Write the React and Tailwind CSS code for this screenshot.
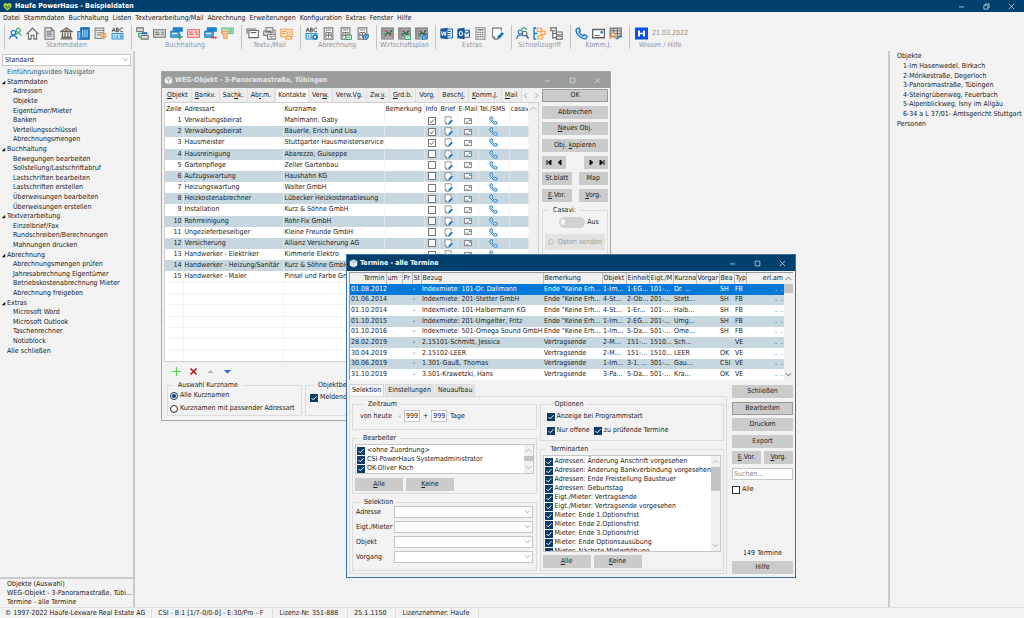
import React from 'react';

const toolbarGroups = [
  { label: 'Stammdaten', icons: ['people', 'house', 'doc', 'bank', 'building', 'listEdit', 'abc'] },
  { label: 'Buchhaltung', icons: ['transfer', 'card', 'stackPlus', 'cardRed', 'stackMinus', 'money'] },
  { label: 'Textv./Mail', icons: ['mail', 'mails', 'mailPerson'] },
  { label: 'Abrechnung', icons: ['abcGear', 'calc', 'calcGreen', 'calcBlue'] },
  { label: 'Wirtschaftsplan', icons: ['chart', 'chartGreen', 'chartBlue'] },
  { label: 'Extras', icons: ['word', 'outlook', 'keypad', 'note'] },
  { label: 'Schnellzugriff', icons: ['peopleSearch', 'folders', 'tree'] },
  { label: 'Komm.J.', icons: ['phone', 'letter', 'calendar'] },
];

const menuItems = ['Datei', 'Stammdaten', 'Buchhaltung', 'Listen', 'Textverarbeitung/Mail', 'Abrechnung', 'Erweiterungen', 'Konfiguration', 'Extras', 'Fenster', 'Hilfe'];

const navigator = [
  { name: 'Stammdaten', items: ['Adressen', 'Objekte', 'Eigentümer/Mieter', 'Banken', 'Verteilungsschlüssel', 'Abrechnungsmengen'] },
  { name: 'Buchhaltung', items: ['Bewegungen bearbeiten', 'Sollstellung/Lastschriftabruf', 'Lastschriften bearbeiten', 'Lastschriften erstellen', 'Überweisungen bearbeiten', 'Überweisungen erstellen'] },
  { name: 'Textverarbeitung', items: ['Einzelbrief/Fax', 'Rundschreiben/Berechnungen', 'Mahnungen drucken'] },
  { name: 'Abrechnung', items: ['Abrechnungsmengen prüfen', 'Jahresabrechnung Eigentümer', 'Betriebskostenabrechnung Mieter', 'Abrechnung freigeben'] },
  { name: 'Extras', items: ['Microsoft Word', 'Microsoft Outlook', 'Taschenrechner', 'Notizblock'] },
];

const objekte = ['1-Im Hasenwedel, Birkach', '2-Mörikestraße, Degerloch', '3-Panoramastraße, Tübingen', '4-Steingrübenweg, Feuerbach', '5-Alpenblickweg, Isny im Allgäu', '6-34 a L 37/01- Amtsgericht Stuttgart'];

const kontakte = [
  ['Verwaltungsbeirat', 'Mahlmann, Gaby', true],
  ['Verwaltungsbeirat', 'Bäuerle, Erich und Lisa', true],
  ['Hausmeister', 'Stuttgarter Hausmeisterservice', true],
  ['Hausreinigung', 'Abarezzo, Guiseppe', false],
  ['Gartenpflege', 'Zeller Gartenbau', false],
  ['Aufzugswartung', 'Haushahn KG', false],
  ['Heizungswartung', 'Walter GmbH', false],
  ['Heizkostenabrechner', 'Lübecker Heizkostenablesung', false],
  ['Installation', 'Kurz & Söhne GmbH', false],
  ['Rohrreinigung', 'Rohr-Fix GmbH', false],
  ['Ungezieferbeseitiger', 'Kleine Freunde GmbH', false],
  ['Versicherung', 'Allianz Versicherung AG', false],
  ['Handwerker - Elektriker', 'Kimmerle Elektro', false],
  ['Handwerker - Heizung/Sanitär', 'Kurz & Söhne GmbH', false],
  ['Handwerker - Maler', 'Pinsel und Farbe GmbH', false],
];

const termine = [
  ['01.08.2012', 'Indexmiete: 101-Dr. Dallmann', 'Ende "Keine Erh...', '1-Im...', '1-EG...', '101-...', 'Dr. ...', 'SH', 'FB'],
  ['01.06.2014', 'Indexmiete: 201-Stetter GmbH', 'Ende "Keine Erh...', '4-St...', '2-Ob...', '201-...', 'Stett...', 'SH', 'FB'],
  ['01.10.2014', 'Indexmiete: 101-Halbermann KG', 'Ende "Keine Erh...', '4-St...', '1-Er...', '101-...', 'Halb...', 'SH', 'FB'],
  ['01.10.2015', 'Indexmiete: 201-Umgelter, Fritz', 'Ende "Keine Erh...', '1-Im...', '2-EG...', '201-...', 'Umg...', 'SH', 'FB'],
  ['01.10.2016', 'Indexmiete: 501-Omega Sound GmbH', 'Ende "Keine Erh...', '1-Im...', '5-Da...', '501-...', 'Ome...', 'SH', 'FB'],
  ['28.02.2019', '2.15101-Schmitt, Jessica', 'Vertragsende', '2-M...', '151-...', '1510...', 'Sch...', '', 'VE'],
  ['30.04.2019', '2.15102-LEER', 'Vertragsende', '2-M...', '151-...', '1510...', 'LEER', 'OK', 'VE'],
  ['30.06.2019', '1.301-Gauß, Thomas', 'Vertragsende', '1-Im...', '3-1. ...', '301-...', 'Gau...', 'CSI', 'VE'],
  ['31.10.2019', '3.501-Krawetzki, Hans', 'Vertragsende', '3-Pa...', '5-Da...', '501-...', 'Kra...', 'OK', 'VE'],
];

const terminarten = ['Adressen: Änderung Anschrift vorgesehen', 'Adressen: Änderung Bankverbindung vorgesehen', 'Adressen: Ende Freistellung Bausteuer', 'Adressen: Geburtstag', 'Eigt./Mieter: Vertragsende', 'Eigt./Mieter: Vertragsende vorgesehen', 'Mieter: Ende 1.Optionsfrist', 'Mieter: Ende 2.Optionsfrist', 'Mieter: Ende 3.Optionsfrist', 'Mieter: Ende Optionsausübung', 'Mieter: Nächste Mieterhöhung'];

const gray = '#777';
const blue = '#1173c0';
const green = '#35a569';
const orange = '#f3a14f';

const phonePath = 'M2.2 1.2 L3.8 .9 L5 3.5 L3.8 4.6 C4.5 6 5.8 7.4 7.4 8.2 L8.5 7 L11.1 8.3 L10.7 10.2 C10 11.6 7.6 11 5.4 9.5 C2.8 7.6 .7 4.7 1 2.6 Z';

const calcShape = (
  <>
    <path d="M2 .8h8v10.4H2z" stroke={gray} fill="#fff" />
    <path d="M3.5 2.8h5M3.5 5v5M6 5v5M8.5 5v5M3.5 5h5M3.5 7.5h5" stroke={gray} />
  </>
);
const chartShape = (
  <>
    <path d="M.7 1h10.6v10H.7z" fill="#b4b4b4" stroke="#777" />
    <path d="M3 1v10M1 3.5h10M1 6h10M1 8.5h10" stroke="#777" strokeWidth=".6" />
    <path d="M4 8l2-3 1.5 1.5L10 3" stroke="#15713b" strokeWidth="1.2" />
    <path d="M4.5 4.5l1.5-1M8 8l1.5-2" stroke="#c33" strokeWidth="1.2" />
  </>
);
const greenBadge = <path d="M6.5 7.5h5v4h-5zM8 9.5h2" fill="#e8f5ec" stroke={green} strokeWidth=".9" />;
const blueBadge = <path d="M7 11.3v-2.5l2-1.8h2.3v2.4l-2 1.7z M8.2 10l2-2" fill="#dcebf8" stroke={blue} />;
const abcShape = (
  <>
    <path d="M1 4.5L2.5 .8 4 4.5M1.5 3.3h2M5 .8v3.7M5 1h1.2c1 0 1 1.6 0 1.6H5h1.4c1.2 0 1.2 1.8 0 1.8H5M11 1.3C9.5 .2 8.2 1.2 8.2 2.6s1.4 2.3 2.8 1.4" stroke="#555" strokeWidth=".9" />
    <path d="M1 6h10v5H1z" fill="#cfe6f7" stroke="#2b93d6" />
    <path d="M3 7.5v2.2M5 7.5h1.3L5 9.7h1.5M8 7.5h1.5v2.2H8M8.5 8.6h1" stroke="#2b93d6" strokeWidth=".8" />
  </>
);

const drawings = {
  people: (
    <>
      <circle cx="8.5" cy="3" r="1.9" stroke={green} />
      <path d="M6.3 7.2c.8-2.1 4.4-2.1 5.2 1" stroke={green} />
      <circle cx="4" cy="5.2" r="2" stroke={blue} />
      <path d="M.6 11.2C.9 6.9 7 6.9 7.4 11.2" stroke={blue} />
    </>
  ),
  house: <path d="M.5 6.5L6 1l5.5 5.5M2.2 5.2v6h2.5V7.6h2.6v3.6h2.5v-6" stroke="#666" strokeWidth="1" />,
  doc: (
    <>
      <path d="M1.8.7h5.7l2.7 2.7v7.9H1.8z" fill="#ddd" stroke={gray} />
      <path d="M3.3 4h5M3.3 5.5h5M3.3 7h5M3.3 8.5h5M7.5.7v2.7h2.7" stroke={gray} strokeWidth=".8" />
    </>
  ),
  bank: (
    <>
      <path d="M.8 4.2L6 .8l5.2 3.4zM.6 11h10.8M1.3 9.6h9.4" fill="#ccc" stroke="#6b6155" strokeWidth="1.1" />
      <path d="M2.3 5v4.2M4.7 5v4.2M7.3 5v4.2M9.7 5v4.2" stroke="#6b6155" strokeWidth="1.2" />
      <circle cx="6" cy="3" r=".9" fill="#6b6155" />
    </>
  ),
  building: (
    <>
      <path d="M3.5.8h7.7v10.4H3.5z" fill="#1f7fcc" stroke="#14609d" />
      <path d="M.8 4.2h2.7v7H.8z" fill="#8ec3ec" stroke="#1f7fcc" />
      <path d="M5.3 2.5v7M7.3 2.5v7M9.3 2.5v7" stroke="#bfe0fa" strokeWidth=".9" />
    </>
  ),
  listEdit: (
    <>
      <path d="M1 1h8v9.5H1zM1 3.3h8" fill="#eee" stroke="#888" />
      <path d="M2.5 5.3h6M2.5 7.3h4" stroke="#888" />
      <path d="M6 6.2h5.5M6 8.5h5.5M8 11l3.5-2.5" stroke={orange} strokeWidth="1.3" />
    </>
  ),
  abc: abcShape,
  transfer: (
    <>
      <path d="M.7.8h6v3.4h-6z" fill="#ddd" stroke={gray} />
      <path d="M4.8 7.8h6.5v3.4H4.8z" fill="#ddd" stroke={gray} />
      <path d="M2 5.8h6M2.5 5.5v3.7h2" stroke={green} strokeWidth="1.2" />
      <path d="M5.5 4.8h5v2h-5z" fill="#2c6fb0" />
    </>
  ),
  card: (
    <>
      <path d="M.6 2.6h10.8v6.8H.6z" fill="#ddd" stroke={gray} />
      <path d="M2 4.8h3.5M2 6.8h4M7.5 4.8h2.5M7.5 6.8h2.5" stroke={gray} />
    </>
  ),
  stackPlus: (
    <>
      <path d="M3 .8h8.3v3H3z" fill="#1f86d0" stroke="#1f7fcc" />
      <path d="M.7 4h7.8v5.5H.7z" fill="#55a7e2" stroke="#1f7fcc" />
      <path d="M2 6h4.5" stroke="#fff" />
      <path d="M9 6.3v5.2M6.4 9h5.2" stroke={green} strokeWidth="1.5" />
    </>
  ),
  cardRed: (
    <>
      <path d="M.6 2.6h10.8v6.8H.6z" fill="#fadcdc" stroke="#ee5c64" />
      <path d="M2 4.8h3M2 6.8h4M7 4.8h3M8 6.8h2" stroke="#ee5c64" strokeWidth="1.2" />
    </>
  ),
  stackMinus: (
    <>
      <path d="M3 .8h8.3v3H3z" fill="#1f86d0" stroke="#1f7fcc" />
      <path d="M.7 4h7.8v5.5H.7z" fill="#55a7e2" stroke="#1f7fcc" />
      <path d="M2 6h4.5" stroke="#fff" />
      <path d="M6.3 9.7h5.3" stroke="#e0343e" strokeWidth="1.5" />
    </>
  ),
  money: (
    <>
      <path d="M.7 1h10.6v5H.7z" fill="#bfe3cd" stroke="#6cbd8a" />
      <circle cx="8.5" cy="3.4" r="1.3" stroke="#6cbd8a" />
      <path d="M1.5 4h4.6v2.4H1.5zM2.5 6.5h3v4h-3z" fill="#fbd9b0" stroke={orange} />
    </>
  ),
  mail: (
    <>
      <path d="M2.7 3.2h8.7v6.6H2.7z" fill="#fff" stroke="#666" />
      <path d="M.6 1.8h9M.9 1.5v4.7M4.5 5.2h5" stroke="#666" />
    </>
  ),
  mails: (
    <>
      <path d="M2.7.7h6.5v4H2.7zM.7 3.7h6.5v4H.7z" fill="#eee" stroke={gray} />
      <path d="M4.2 6.7h7v4.5h-7zM5.5 8.2l2.2 1.4 2.2-1.4M9.2 3h2v3.5" fill="#fff" stroke={gray} />
    </>
  ),
  mailPerson: (
    <>
      <path d="M.7 2h10.6v7H.7z" fill="#fce4c8" stroke={orange} />
      <path d="M2 4.2h4M2 6h3" stroke={orange} />
      <circle cx="8" cy="6" r="1.4" fill="#fff" stroke={orange} />
      <path d="M5.5 11.2c.3-3.6 4.7-3.6 5 0z" fill="#fff" stroke={orange} />
    </>
  ),
  abcGear: (
    <>
      {abcShape}
      <circle cx="9.3" cy="9.3" r="1.8" fill="#fff" stroke="#1569b0" strokeWidth="1.3" />
    </>
  ),
  calc: calcShape,
  calcGreen: <>{calcShape}{greenBadge}</>,
  calcBlue: <>{calcShape}{blueBadge}</>,
  chart: chartShape,
  chartGreen: <>{chartShape}{greenBadge}</>,
  chartBlue: <>{chartShape}{blueBadge}</>,
  word: (
    <>
      <path d="M5.5 1.8h6v8.4h-6z" fill="#fff" stroke="#2467a8" />
      <path d="M7 4h3M7 6h3M7 8h3" stroke="#2467a8" />
      <path d="M.3 1.6L7 .6v10.8L.3 10.4z" fill="#17599c" />
      <path d="M1.4 4l.9 4 1.2-3.6L4.7 8l.9-4" stroke="#fff" strokeWidth=".9" />
    </>
  ),
  outlook: (
    <>
      <path d="M5.5 3h6v6.5h-6zM6 3.5l3 2.7 2.5-2.4" fill="#fff" stroke="#2467a8" />
      <path d="M.3 1.6L7 .6v10.8L.3 10.4z" fill="#17599c" />
      <ellipse cx="3.6" cy="6" rx="1.5" ry="1.9" stroke="#fff" strokeWidth="1" />
    </>
  ),
  keypad: (
    <>
      <path d="M1.8.7h8.4v10.6H1.8z" fill="#f0f0f0" stroke="#888" />
      <path d="M3.3 2.6h5.4" stroke="#777" strokeWidth="1.3" />
      <path d="M3 5h6M3 7h6M3 9h6" stroke="#777" strokeDasharray="1.3 .9" strokeWidth="1.2" />
    </>
  ),
  note: (
    <>
      <path d="M9.5 4V1h-8v8.5l1.8 1.7h3" fill="#fff" stroke="#777" />
      <path d="M1.5 9.2h1.9v2" stroke="#777" />
      <path d="M5.6 11.6l.7-3 3.9-4 1.7 1.7-4 4.3z" fill={blue} />
    </>
  ),
  peopleSearch: (
    <>
      <circle cx="4" cy="4.6" r="1.9" stroke={blue} />
      <path d="M.6 11C.9 6.9 5 6.6 6.2 8.6" stroke={blue} />
      <path d="M4.8 2.2C6 .2 9.6.4 10 2.7" stroke={green} />
      <circle cx="8" cy="6" r="2.1" fill="#fff" stroke="#666" />
      <path d="M9.4 7.6l2.2 3" stroke="#555" strokeWidth="1.4" />
    </>
  ),
  folders: (
    <>
      <path d="M3 .9H1v10.2h2M1 6h3" stroke={blue} strokeWidth="1.2" />
      <path d="M4 1.2h4v3H4zM7.2 3.8h4v3h-4zM4.5 8h4.5v3H4.5z" fill="#fdeede" stroke={orange} />
    </>
  ),
  tree: (
    <>
      <path d="M.8.8h5v2.6h-5zM6 4.6h5.2v2.6H6zM6 8.6h5.2v2.6H6z" fill="#fff" stroke="#666" />
      <path d="M2.5 3.4V10H6M2.5 6H6" stroke="#666" />
    </>
  ),
  phone: <path d={phonePath} fill="#d6e8f7" stroke={blue} strokeWidth="1.2" />,
  letter: (
    <>
      <path d="M.6 2.3h10.8v7.6H.6z" fill="#fff" stroke="#666" strokeWidth="1.2" />
      <path d="M2.3 7.8h5" stroke={gray} />
      <path d="M7.8 3.8h2.2v2.2H7.8z" fill={blue} />
    </>
  ),
  calendar: (
    <>
      <path d="M1 1h10.4v8.3H1z" fill="#ccc" stroke={gray} />
      <path d="M1 3.4h10.4M4.3 1v8M7.8 1v8M1 6h10.4" stroke={gray} />
      <circle cx="3.8" cy="7" r="1.4" fill="#fff" stroke={orange} />
      <path d="M1 11.4c.3-3.2 5.2-3.2 5.5 0" stroke={orange} />
      <path d="M7 11.3l4-3.6" stroke={blue} strokeWidth="1.3" />
    </>
  ),
  cube: (
    <>
      <path d="M6 .6l5 2.2v6L6 11.4l-5-2.6v-6z" fill="#e9eef2" />
      <path d="M1 2.8l5 2.4 5-2.4M6 5.2v6.2M3.5 1.7l5 2.4" stroke="#8fa0ac" strokeWidth=".8" />
    </>
  ),
  heart: (
    <>
      <path d="M6 11.5C2.5 9 .5 6.8.5 4.2.5 1.2 4.2.1 6 2.8 7.8.1 11.5 1.2 11.5 4.2c0 2.6-2 4.8-5.5 7.3z" fill="#a9c93b" />
      <path d="M3.3 3.8l2.7 2 2.7-2v3.4L6 9.4 3.3 7.2z" fill="#4f9a3c" />
      <path d="M4.3 3.3l1.7 1.2 1.7-1.2" stroke="#f2f6c8" />
    </>
  ),
};

function Icon({ name, className = 'size-[13px]' }) {
  return (
    <svg viewBox="0 0 12 12" fill="none" className={`${className} shrink-0`} aria-hidden="true">
      {drawings[name]}
    </svg>
  );
}

// "&" marks the underlined shortcut letter
function Hotkey({ text }) {
  const at = text.indexOf('&');
  if (at < 0) return text;
  return (
    <span>
      {text.slice(0, at)}
      <u>{text[at + 1]}</u>
      {text.slice(at + 2)}
    </span>
  );
}

function Button({ text, className = '' }) {
  return (
    <button className={`flex h-[13px] items-center justify-center bg-[#cbcbcb] ${className}`}>
      <Hotkey text={text} />
    </button>
  );
}

function Chevron({ className = '', up = false }) {
  return (
    <svg viewBox="0 0 8 8" fill="none" className={`size-[7px] ${className}`} aria-hidden="true">
      <path d={up ? 'M1 5.5L4 2.5l3 3' : 'M1 2.5l3 3 3-3'} stroke="currentColor" />
    </svg>
  );
}

function Select({ label, options = [''], className = '' }) {
  return (
    <div className={`relative flex ${className}`}>
      <select aria-label={label} id={label} className="h-3 w-full appearance-none border border-[#c6c6c6] bg-white px-0.5 leading-none">
        {options.map((o) => (
          <option key={o}>{o}</option>
        ))}
      </select>
      <Chevron className="pointer-events-none absolute right-0.5 top-0.5 text-[#999]" />
    </div>
  );
}

function Check({ label, checked = true }) {
  return (
    <label className="flex items-center gap-0.5 whitespace-nowrap">
      <span className="relative flex size-2 shrink-0">
        <input type="checkbox" defaultChecked={checked} className="peer size-2 appearance-none border border-[#333] bg-white checked:border-[#0d3d66] checked:bg-[#0d3d66]" />
        <svg viewBox="0 0 8 8" fill="none" className="pointer-events-none absolute inset-0 hidden size-2 peer-checked:block" aria-hidden="true">
          <path d="M1.5 4l1.8 1.8 3.2-3.6" stroke="#fff" strokeWidth=".9" />
        </svg>
      </span>
      {label}
    </label>
  );
}

function Group({ title, className = '', children }) {
  return (
    <fieldset className={`min-w-0 border border-[#dcdcdc] ${className}`}>
      <legend className="ml-1 px-1 leading-[8px]">{title}</legend>
      {children}
    </fieldset>
  );
}

function Scrollbar({ thumb, color = 'text-[#aaa]' }) {
  return (
    <div className={`flex w-[9px] shrink-0 flex-col items-center justify-between bg-[#f0f0f0] py-0.5 ${color}`}>
      <div className="flex w-full flex-col items-center gap-0.5">
        <Chevron up />
        {thumb && <div className={`w-full bg-[#c4c4c4] ${thumb}`} />}
      </div>
      <Chevron />
    </div>
  );
}

function TitleBar({ title, color }) {
  return (
    <div className={`flex h-4 items-center ${color}`}>
      <Icon name="cube" className="ml-0.5 size-[9px]" />
      <span className="ml-0.5 flex-1 font-bold">{title}</span>
      <WindowButtons />
    </div>
  );
}

function WindowButtons({ restore = false }) {
  return (
    <div className="flex">
      {['Minimieren', 'Maximieren', 'Schließen'].map((name, i) => (
        <button key={name} aria-label={name} className="flex w-[25px] justify-center">
          <svg viewBox="0 0 8 8" fill="none" stroke="#dfe6ec" strokeWidth=".8" className="size-[7px]" aria-hidden="true">
            {i === 0 && <path d="M1 4.5h6" />}
            {i === 1 && !restore && <path d="M1.3 1.3h5.4v5.4H1.3z" />}
            {i === 1 && restore && <path d="M1 2.5h4.5V7H1zM2.5 2.5V1H7v4.5H5.5" />}
            {i === 2 && <path d="M1 1l6 6M7 1L1 7" />}
          </svg>
        </button>
      ))}
    </div>
  );
}

function Toolbar() {
  return (
    <div className="flex h-[27px] items-start pl-1 pt-px">
      {toolbarGroups.map((group) => (
        <div key={group.label} className="flex h-6 flex-col border-l border-[#c4c4c4] pl-0.5 pr-[5px]">
          <div className="flex pt-0.5">
            {group.icons.map((icon) => (
              <button key={icon} aria-label={icon} className="flex w-[17px] justify-center">
                <Icon name={icon} />
              </button>
            ))}
          </div>
          <span className="text-center leading-[10px] text-[#8a95a8]">{group.label}</span>
        </div>
      ))}
      <div className="flex h-6 flex-col border-l border-[#c4c4c4] pl-[5px]">
        <div className="flex items-center gap-1 pt-0.5">
          <button aria-label="Haufe">
            <svg viewBox="0 0 13 12" className="h-[13px] w-[13px]" aria-hidden="true">
              <path d="M0 0h13v12H0z" fill="#0b50f0" />
              <path d="M3 3h2v2.2h3V3h2v6H8V6.8H5V9H3z" fill="#fff" />
            </svg>
          </button>
          <span className="text-[#8f8f8f]">21.03.2022</span>
        </div>
        <span className="pl-1 leading-[10px] text-[#8a95a8]">Wissen / Hilfe</span>
      </div>
    </div>
  );
}

function Sidebar() {
  return (
    <aside className="flex w-[135px] shrink-0 flex-col border-r-2 border-[#cacaca]">
      <Select label="Ansicht" options={['Standard']} className="mx-0.5 mt-[3px]" />
      <nav className="mt-0.5 grid h-[288px] auto-rows-fr items-center">
        <a href="#video" className="pl-[7px] text-[#1d5a80]">Einführungsvideo Navigator</a>
        {navigator.map((section) => (
          <React.Fragment key={section.name}>
            <a href="#sektion" className="flex items-center">
              <svg viewBox="0 0 6 6" className="ml-px mr-px size-[5px]" aria-hidden="true">
                <path d="M5 1v4H1z" fill="#111" />
              </svg>
              {section.name}
            </a>
            {section.items.map((item) => (
              <a key={item} href="#eintrag" className="whitespace-nowrap pl-[13px]">{item}</a>
            ))}
          </React.Fragment>
        ))}
        <a href="#alle" className="pl-[7px]">Alle schließen</a>
      </nav>
      <div className="mt-auto grid auto-rows-fr items-center border-t-2 border-[#cacaca] pl-[7px] pt-px leading-[9px]">
        <a href="#objekte">Objekte (Auswahl)</a>
        <a href="#weg" className="truncate">WEG-Objekt - 3-Panoramastraße, Tübi...</a>
        <a href="#termine">Termine - alle Termine</a>
      </div>
    </aside>
  );
}

const wegTabs = ['&Objekt', '&Bankv.', 'Sac&hk.', 'Ab&r.m.', 'Kontakte', 'Ver&w.', 'Verw.V&g.', 'Zw.&v.', '&Grd.b.', 'Vor&g.', 'Besch&l.', '&Komm.J.', '&Mail'];
const wegCols = ['w-[18px]', 'w-[100px]', 'w-[101px]', 'w-[40px]', 'w-[15px]', 'w-[18px]', 'w-[21px]', 'w-[31px]', ''];
const wegHeads = ['Zeile', 'Adressart', 'Kurzname', 'Bemerkung', 'Info', 'Brief', 'E-Mail', 'Tel./SMS', 'casavi'];

function WegWindow() {
  return (
    <section className="absolute left-[26px] top-5 w-[450px] border border-[#a6a6a6] bg-[#f2f2f2]">
      <TitleBar title="WEG-Objekt - 3-Panoramastraße, Tübingen" color="bg-[#9b9d9c] text-[#e6e6e6]" />
      <div className="flex gap-[3px] pb-1 pl-0.5 pr-0.5">
        <div className="min-w-0 flex-1">
          <div className="flex h-[14px] items-stretch">
            {wegTabs.map((tab) => (
              <button key={tab} className={tab === 'Kontakte' ? 'border border-b-0 border-[#dedede] bg-[#fafafa] px-0.5' : 'border-r border-[#dedede] bg-[#ececec] px-[3px]'}>
                <Hotkey text={tab} />
              </button>
            ))}
            <span className="ml-auto flex items-center gap-1 text-[#999]">
              <Chevron className="rotate-90" />
              <Chevron className="-rotate-90" />
            </span>
          </div>
          <div className="flex border border-[#cfcfcf] bg-white">
            <div className="min-w-0 flex-1">
              <table className="h-[258px] w-full table-fixed border-collapse">
                <colgroup>
                  {wegCols.map((c, i) => (
                    <col key={i} className={c} />
                  ))}
                </colgroup>
                <thead>
                  <tr className="h-3">
                    {wegHeads.map((h) => (
                      <th key={h} className="overflow-hidden whitespace-nowrap border-r border-[#ededed] px-px py-0 text-left font-normal">{h}</th>
                    ))}
                  </tr>
                </thead>
                <tbody>
                  {kontakte.map(([art, name, info], i) => (
                    <tr key={i} className="h-[11px] even:bg-[#c7d7e0] [&>td]:border-r [&>td]:border-[#ededed]/60 [&>td]:py-0">
                      <td className="pr-px text-right">{i + 1}</td>
                      <td className="whitespace-nowrap pl-px">{art}</td>
                      <td className="whitespace-nowrap pl-px">{name}</td>
                      <td />
                      <td className="px-0">
                        <span className="relative mx-auto flex size-2">
                          <input type="checkbox" aria-label={`Info ${i + 1}`} defaultChecked={info} className="peer size-2 appearance-none border border-[#777] bg-white" />
                          <svg viewBox="0 0 8 8" fill="none" className="pointer-events-none absolute inset-0 hidden peer-checked:block" aria-hidden="true">
                            <path d="M1.8 4l1.5 1.7 3-3.4" stroke="#444" strokeWidth=".8" />
                          </svg>
                        </span>
                      </td>
                      <td className="px-0"><Icon name="note" className="mx-auto size-[9px]" /></td>
                      <td className="px-0"><Icon name="letter" className="mx-auto size-2" /></td>
                      <td className="px-0"><Icon name="phone" className="mx-auto size-[9px]" /></td>
                      <td />
                    </tr>
                  ))}
                  {[1, 2, 3, 4, 5, 6, 7].map((n) => (
                    <tr key={n} className="h-[11px] border-t border-[#f3f3f3]">
                      {wegHeads.map((h) => (
                        <td key={h} className="border-r border-[#f3f3f3] p-0" />
                      ))}
                    </tr>
                  ))}
                </tbody>
              </table>
            </div>
            <Scrollbar />
          </div>
          <div className="flex h-[19px] items-center gap-2 pl-2">
            <button aria-label="Neu">
              <svg viewBox="0 0 9 9" className="size-[9px]"><path d="M4.5 0v9M0 4.5h9" stroke="#55d055" strokeWidth="1.2" /></svg>
            </button>
            <button aria-label="Löschen">
              <svg viewBox="0 0 9 9" className="size-[9px]"><path d="M1.5 1.5l6 6M7.5 1.5l-6 6" stroke="#b01818" strokeWidth="1.6" /></svg>
            </button>
            <button aria-label="Nach oben">
              <svg viewBox="0 0 9 9" className="size-[9px]"><path d="M1.5 6l3-3 3 3z" fill="#b0b0b0" /></svg>
            </button>
            <button aria-label="Nach unten">
              <svg viewBox="0 0 9 9" className="size-[9px]"><path d="M1 3h7L4.5 6.5z" fill="#2765e6" /></svg>
            </button>
          </div>
          <div className="flex gap-[3px] pl-[3px]">
            <Group title="Auswahl Kurzname" className="w-[135px] pl-0.5">
              {['Alle Kurznamen', 'Kurznamen mit passender Adressart'].map((text, i) => (
                <label key={text} className="flex h-[13px] items-center gap-0.5 whitespace-nowrap">
                  <input type="radio" name="kurzname" defaultChecked={i === 0} className="size-2 shrink-0 appearance-none rounded-full border border-[#333] bg-white bg-clip-content p-px checked:border-[#0d3d66] checked:bg-[#0d3d66]" />
                  {text}
                </label>
              ))}
            </Group>
            <Group title="Objektbetreuer" className="flex-1 pl-1 pt-1">
              <Check label="Meldender" />
            </Group>
          </div>
        </div>
        <div className="w-[66px] shrink-0 pt-px">
          <div className="flex h-[113px] flex-col justify-between">
            <Button text="OK" className="border border-[#999]" />
            <Button text="Abbrechen" />
            <Button text="&Neues Obj." />
            <Button text="Obj. &kopieren" />
            <div className="flex justify-between">
              {['M4 4v5M8 4L5 6.5 8 9zM18 4l-3 2.5L18 9z', 'M5 4l3 2.5L5 9zM15 4l3 2.5L15 9zM19 4v5'].map((d) => (
                <button key={d} aria-label="Blättern" className="flex h-[13px] w-6 items-center justify-center bg-[#cbcbcb]">
                  <svg viewBox="0 0 22 13" className="h-[13px] w-[22px]"><path d={d} fill="#111" stroke="#111" strokeWidth="1" /></svg>
                </button>
              ))}
            </div>
            <div className="grid grid-cols-2 gap-[7px]"><Button text="St.blatt" /><Button text="Map" /></div>
            <div className="grid grid-cols-2 gap-[7px]"><Button text="&E.Vor." /><Button text="&Vorg." /></div>
          </div>
          <Group title="Casavi:" className="mt-1 px-0.5 pb-1">
            <div className="flex h-4 items-center justify-center gap-0.5 pl-2">
              <button role="switch" aria-checked="false" aria-label="Casavi" className="flex h-[11px] w-[26px] items-center rounded-full bg-[#d2d2d2] pl-0.5">
                <span className="h-1.5 w-1 rounded-sm bg-[#f5f5f5]" />
              </button>
              Aus
            </div>
            <button disabled className="mt-1 flex h-4 w-full items-center justify-center gap-1 whitespace-nowrap bg-[#e2e2e2] text-[#9b9b9b]">
              <span className="size-1.5 rounded-full border border-[#b5c9b5]" />
              Daten senden
            </button>
          </Group>
        </div>
      </div>
    </section>
  );
}

const terminCols = ['w-[36px]', 'w-[16px]', 'w-[10px]', 'w-[9px]', 'w-[122px]', 'w-[59px]', 'w-[24px]', 'w-[23px]', 'w-[24px]', 'w-[23px]', 'w-[23px]', 'w-[15px]', 'w-[12px]', ''];
const terminHeads = ['Termin', 'um', 'Pr', 'St', 'Bezug', 'Bemerkung', 'Objekt', 'Einheit', 'Eigt./M', 'Kurzna', 'Vorgar', 'Bea', 'Typ', 'erl.am'];

function TermineWindow() {
  return (
    <section className="absolute left-[211px] top-[203px] w-[450px] border border-[#3d729f] bg-[#f2f2f2]">
      <TitleBar title="Termine - alle Termine" color="bg-[#00406f] text-white" />
      <div className="mx-0.5 mt-px flex border-l border-t border-[#999] bg-white">
        <div className="min-w-0 flex-1">
          <table className="h-[107px] w-full table-fixed border-collapse">
            <colgroup>
              {terminCols.map((c, i) => (
                <col key={i} className={c} />
              ))}
            </colgroup>
            <thead>
              <tr className="h-[11px] bg-[#f0f0f0]">
                {terminHeads.map((h) => (
                  <th key={h} className="overflow-hidden whitespace-nowrap border-r border-[#bbb] px-px py-0 text-left font-normal first:text-right last:border-r-0 last:text-right">{h}</th>
                ))}
              </tr>
            </thead>
            <tbody>
              {termine.map(([datum, bezug, bemerkung, ...rest], i) => (
                <tr key={i} className={`[&>td]:whitespace-nowrap [&>td]:px-px [&>td]:py-0 ${i === 0 ? 'bg-[#0078d7] text-white' : 'even:bg-[#c7d7e0]'}`}>
                  <td>{datum}</td>
                  <td />
                  <td />
                  <td>-</td>
                  <td>{bezug}</td>
                  <td>{bemerkung}</td>
                  {rest.slice(0, 4).map((cell, n) => (
                    <td key={n}>{cell}</td>
                  ))}
                  <td />
                  <td>{rest[4]}</td>
                  <td>{rest[5]}</td>
                  <td className="text-right">.&nbsp; .</td>
                </tr>
              ))}
            </tbody>
          </table>
        </div>
        <Scrollbar thumb="h-[9px]" color="text-[#555]" />
      </div>
      <div className="mt-1 flex gap-[5px] px-0.5 pb-[3px]">
        <div className="flex min-w-0 flex-1 flex-col">
          <div className="flex h-3 items-stretch gap-px">
            {['Selektion', 'Einstellungen', 'Neuaufbau'].map((tab, i) => (
              <button key={tab} className={i === 0 ? 'border border-b-0 border-[#d5d5d5] bg-[#f7f7f7] px-0.5' : 'border border-b-0 border-[#dcdcdc] bg-[#e4e4e4] px-0.5'}>
                {tab}
              </button>
            ))}
          </div>
          <div className="grid flex-1 grid-cols-2 gap-[3px] border border-[#dcdcdc] px-0.5 pb-0.5 pt-[3px]">
            <div className="flex flex-col gap-1">
              <Group title="Zeitraum" className="h-[30px] pl-[7px]">
                <div className="flex items-center gap-[3px] pt-0.5">
                  <label htmlFor="tage-vor" className="pr-1">von heute</label>-
                  <input id="tage-vor" defaultValue="999" className="h-3 w-4 border border-[#c6c6c6] bg-white text-center" />+
                  <input id="tage-nach" aria-label="Tage nach heute" defaultValue="999" className="h-3 w-4 border border-[#c6c6c6] bg-white text-center" />
                  Tage
                </div>
              </Group>
              <Group title="Bearbeiter" className="px-0.5 pb-0.5">
                <div className="mt-0.5 flex h-[30px] border border-[#c6c6c6] bg-white">
                  <div className="flex-1 overflow-hidden pl-px pt-px">
                    {['<ohne Zuordnung>', 'CSI-PowerHaus Systemadministrator', 'OK-Oliver Koch'].map((t) => (
                      <div key={t} className="flex h-[9px] items-center"><Check label={t} /></div>
                    ))}
                  </div>
                  <Scrollbar thumb="h-[5px]" />
                </div>
                <div className="mt-1 flex gap-[3px]"><Button text="&Alle" className="w-12" /><Button text="&Keine" className="w-12" /></div>
              </Group>
              <Group title="Selektion" className="flex-1 pl-[3px] pr-[3px]">
                <div className="flex flex-col gap-[3px]">
                  {['Adresse', 'Eigt./Mieter', 'Objekt', 'Vorgang'].map((name) => (
                    <div key={name} className="flex items-center">
                      <label htmlFor={name} className="w-[38px] whitespace-nowrap">{name}</label>
                      <Select label={name} className="flex-1" />
                    </div>
                  ))}
                </div>
              </Group>
            </div>
            <div className="flex flex-col gap-1">
              <Group title="Optionen" className="h-[41px] pl-1.5">
                <div className="flex flex-col gap-[5px] pt-1">
                  <Check label="Anzeige bei Programmstart" />
                  <div className="flex gap-1"><Check label="Nur offene" /><Check label="zu prüfende Termine" /></div>
                </div>
              </Group>
              <Group title="Terminarten" className="flex-1 px-0.5 pb-0.5">
                <div className="mt-0.5 flex h-[97px] border border-[#c6c6c6] bg-white">
                  <div className="flex-1 overflow-hidden pl-px pt-px">
                    {terminarten.map((t) => (
                      <div key={t} className="flex h-[9px] items-center"><Check label={t} /></div>
                    ))}
                  </div>
                  <Scrollbar thumb="h-6" />
                </div>
                <div className="mt-[3px] flex gap-[3px]"><Button text="&Alle" className="w-12" /><Button text="&Keine" className="w-12" /></div>
              </Group>
            </div>
          </div>
        </div>
        <div className="flex w-[61px] shrink-0 flex-col">
          <div className="flex h-24 flex-col justify-between pt-px">
            <Button text="Schließen" />
            <Button text="Bearbeiten" className="border border-[#999]" />
            <Button text="Drucken" />
            <Button text="Export" />
            <div className="grid grid-cols-2 gap-[3px]"><Button text="&E.Vor." /><Button text="&Vorg." /></div>
            <input placeholder="Suchen..." aria-label="Suchen" className="h-3 w-full border border-[#c6c6c6] bg-white px-px placeholder:text-[#888]" />
          </div>
          <div className="mt-[5px]"><Check label="Alle" checked={false} /></div>
          <span className="mb-[3px] mt-auto text-center">149 Termine</span>
          <Button text="Hilfe" />
        </div>
      </div>
    </section>
  );
}

function App() {
  return (
    <div className="flex h-screen flex-col overflow-hidden bg-[#f2f2f2] font-['DejaVu_Sans_Condensed','DejaVu_Sans',sans-serif] text-[7px] leading-[9px] text-[#222]">
      <header className="flex h-3 items-center bg-[#00406f] text-white">
        <Icon name="heart" className="ml-[3px] size-[9px]" />
        <span className="ml-[3px] flex-1 font-bold">Haufe PowerHaus - Beispieldaten</span>
        <WindowButtons restore />
      </header>
      <nav className="flex h-3 items-center gap-1 pl-[3px]">
        {menuItems.map((item) => (
          <button key={item}>{item}</button>
        ))}
      </nav>
      <Toolbar />
      <div className="flex min-h-0 flex-1">
        <Sidebar />
        <main className="relative min-w-0 flex-1">
          <WegWindow />
          <TermineWindow />
        </main>
        <aside className="w-[136px] shrink-0 border-l-2 border-[#cacaca] pl-[7px] pt-px">
          <div className="grid h-[77px] auto-rows-fr items-center">
            <a href="#objekte">Objekte</a>
            {objekte.map((o) => (
              <a key={o} href="#objekt" className="whitespace-nowrap pl-1.5">{o}</a>
            ))}
            <a href="#personen">Personen</a>
          </div>
        </aside>
      </div>
      <footer className="flex h-[11px] items-center border-t border-[#e0e0e0]">
        {['© 1997-2022 Haufe-Lexware Real Estate AG', 'CSI - B:1 [1/7-0/0-0] - E:30/Pro - F', 'Lizenz-Nr. 351-888', '25.1.1150', 'Lizenznehmer: Haufe'].map((t) => (
          <span key={t} className="border-r border-[#dcdcdc] pl-1.5 pr-[9px] first:pl-[5px] first:pr-1.5">{t}</span>
        ))}
      </footer>
    </div>
  );
}

export default App;
